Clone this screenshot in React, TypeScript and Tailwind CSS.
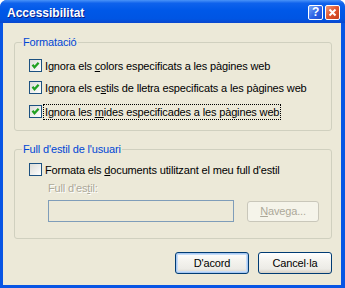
import React from "react";

const CheckBox = ({ checked }: { checked: boolean }) => (
  <span className="flex h-[13px] w-[13px] shrink-0 items-center justify-center border border-[#1C5180] bg-gradient-to-br from-[#DCDCD7] to-white">
    {checked && (
      <svg width="11" height="11" viewBox="0 0 11 11">
        <polyline
          points="2.5,4.8 4.5,7.3 8.6,2.8"
          fill="none"
          stroke="#21A121"
          strokeWidth="2.3"
        />
      </svg>
    )}
  </span>
);

const CheckRow = ({
  checked,
  focused,
  children,
  className,
}: {
  checked: boolean;
  focused?: boolean;
  children: React.ReactNode;
  className?: string;
}) => (
  <div className={`flex h-[13px] items-center pl-[14px] ${className ?? ""}`}>
    <CheckBox checked={checked} />
    <span
      className={`ml-[1px] whitespace-nowrap border px-[1px] leading-[14px] ${
        focused ? "border-dotted border-black" : "border-transparent"
      }`}
    >
      {children}
    </span>
  </div>
);

const GroupBox = ({
  label,
  className,
  children,
}: {
  label: string;
  className?: string;
  children: React.ReactNode;
}) => (
  <div
    className={`relative ml-[11px] w-[318px] rounded-[3px] border border-[#D0D0BF] ${className ?? ""}`}
  >
    <span className="absolute -top-[8px] left-[7px] bg-[#ECE9D8] px-[1px] leading-[14px] text-[#0046D5]">
      {label}
    </span>
    {children}
  </div>
);

export default function App() {
  return (
    <div className="h-[288px] w-[345px] select-none overflow-hidden rounded-t-[7px] bg-[#0855E4] font-['Liberation_Sans',Arial,sans-serif] text-[11px] tracking-[-0.15px] text-black">
      {/* title bar */}
      <div className="flex h-[23px] items-center bg-[linear-gradient(180deg,#4A93F8_0%,#0F62EC_14%,#0058E8_45%,#0055E3_82%,#0A47CE_100%)] pl-[7px] pr-[5px]">
        <span className="pt-[2px] text-[12px] font-bold tracking-normal text-white [text-shadow:1px_1px_0_#0A1E8A]">
          Accessibilitat
        </span>
        <div className="ml-auto flex gap-[2px] pt-[1px]">
          <div className="flex h-[15px] w-[15px] items-center justify-center rounded-[2px] border border-white bg-[linear-gradient(135deg,#79A8F7,#2D62E6_55%,#1D4CCD)]">
            <span className="text-[12px] font-bold leading-none text-white">?</span>
          </div>
          <div className="flex h-[15px] w-[15px] items-center justify-center rounded-[2px] border border-white bg-[linear-gradient(135deg,#F09A7A,#E0552D_50%,#C53E1B)]">
            <svg width="9" height="9" viewBox="0 0 9 9">
              <path d="M1.5 1.5 L7.5 7.5 M7.5 1.5 L1.5 7.5" stroke="white" strokeWidth="2" />
            </svg>
          </div>
        </div>
      </div>

      {/* body */}
      <div className="ml-[3px] flex h-[262px] w-[338px] flex-col bg-[#ECE9D8] pt-[19px]">
        <GroupBox label="Formatació" className="h-[89px]">
          <CheckRow checked className="mt-[16px]">
            Ignora els <u className="underline-offset-[1px]">c</u>olors especificats a les pàgines web
          </CheckRow>
          <CheckRow checked className="mt-[9px]">
            Ignora els e<u className="underline-offset-[1px]">s</u>tils de lletra especificats a les pàgines web
          </CheckRow>
          <CheckRow checked focused className="mt-[11px]">
            Ignora les <u className="underline-offset-[1px]">m</u>ides especificades a les pàgines web
          </CheckRow>
        </GroupBox>

        <GroupBox label="Full d'estil de l'usuari" className="mt-[18px] h-[90px]">
          <CheckRow checked={false} className="mt-[13px]">
            Formata els <u className="underline-offset-[1px]">d</u>ocuments utilitzant el meu full d'estil
          </CheckRow>
          <div className="mt-[6px] pl-[33px] leading-[13px] text-[#ACA899] [text-shadow:1px_1px_0_#FFFFFF]">
            Full d'es<u className="underline-offset-[1px]">t</u>il:
          </div>
          <div className="mt-[5px] flex items-start pl-[33px]">
            <div className="h-[22px] w-[186px] border border-[#7F9DB9] bg-[#ECE9D8]" />
            <div className="ml-[13px] mt-[1px] flex h-[21px] w-[72px] items-center justify-center rounded-[3px] border border-[#C9C7BA] bg-[#F5F4EA] text-[#ACA899]">
              <span>
                <u className="underline-offset-[1px]">N</u>avega...
              </span>
            </div>
          </div>
        </GroupBox>

        <div className="mt-[13px] flex justify-end gap-[9px] pr-[9px]">
          <button className="flex h-[22px] w-[74px] items-center justify-center rounded-[3px] border border-[#003C74] bg-[linear-gradient(180deg,#FFFFFF_0%,#F4F3EE_40%,#ECEBE6_80%,#D6D0C5_100%)] shadow-[inset_0_0_0_1px_#A8C8F2,inset_0_0_0_2px_#C6DDF8]">
            D'acord
          </button>
          <button className="flex h-[22px] w-[74px] items-center justify-center rounded-[3px] border border-[#003C74] bg-[linear-gradient(180deg,#FFFFFF_0%,#F4F3EE_40%,#ECEBE6_80%,#D6D0C5_100%)]">
            Cancel·la
          </button>
        </div>
      </div>
    </div>
  );
}
